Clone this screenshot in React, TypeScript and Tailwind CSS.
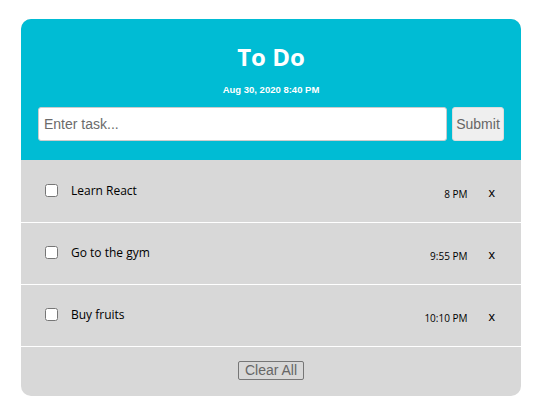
import React from "react";

const tasks = [
  { id: 1, text: "Learn React", time: "8 PM" },
  { id: 2, text: "Go to the gym", time: "9:55 PM" },
  { id: 3, text: "Buy fruits", time: "10:10 PM" },
];

export default function App() {
  return (
    <div className="min-h-[416px] bg-white pt-[19px] font-['Open_Sans',sans-serif]">
      <div className="mx-auto w-[500px] overflow-hidden rounded-[10px] bg-[#d8d8d8]">
        <div className="bg-[#00bcd4] px-[17px] pb-[19px] pt-[22px] text-center text-white">
          <h1 className="text-[24px] font-bold leading-[32px]">To Do</h1>
          <p className="mt-[10px] font-['Liberation_Sans',sans-serif] text-[9.5px] font-bold leading-[14px]">
            Aug 30, 2020 8:40 PM
          </p>
          <div className="mt-[10px] flex gap-[5px]">
            <input
              type="text"
              placeholder="Enter task..."
              className="h-[34px] flex-1 rounded-[3px] border border-[#ccc] bg-white px-[5px] font-['Liberation_Sans',sans-serif] text-[14px] text-black outline-none placeholder:text-[#6b6b6b]"
            />
            <button className="h-[34px] w-[52px] rounded-[3px] border border-[#ddd] bg-[#efefef] font-['Liberation_Sans',sans-serif] text-[14px] text-[#666]">
              Submit
            </button>
          </div>
        </div>
        <ul className="mt-[1px]">
          {tasks.map((task) => (
            <li
              key={task.id}
              className="flex h-[62px] items-center border-b border-white pl-[24px] pr-[26px]"
            >
              <input type="checkbox" className="mb-[2px] h-[13px] w-[13px]" />
              <span className="mb-[2px] ml-[13px] flex-1 text-[12px] text-black">{task.text}</span>
              <span className="mt-[6px] text-[10px] text-black">{task.time}</span>
              <span className="ml-[21px] mt-[3px] font-['Liberation_Sans',sans-serif] text-[13px] text-black">x</span>
            </li>
          ))}
        </ul>
        <div className="flex h-[49px] items-center justify-center pb-[2px]">
          <button className="h-[19px] rounded-[2px] border border-[#767676] px-[6px] font-['Liberation_Sans',sans-serif] text-[14px] leading-[15px] text-[#666]">
            Clear All
          </button>
        </div>
      </div>
    </div>
  );
}
